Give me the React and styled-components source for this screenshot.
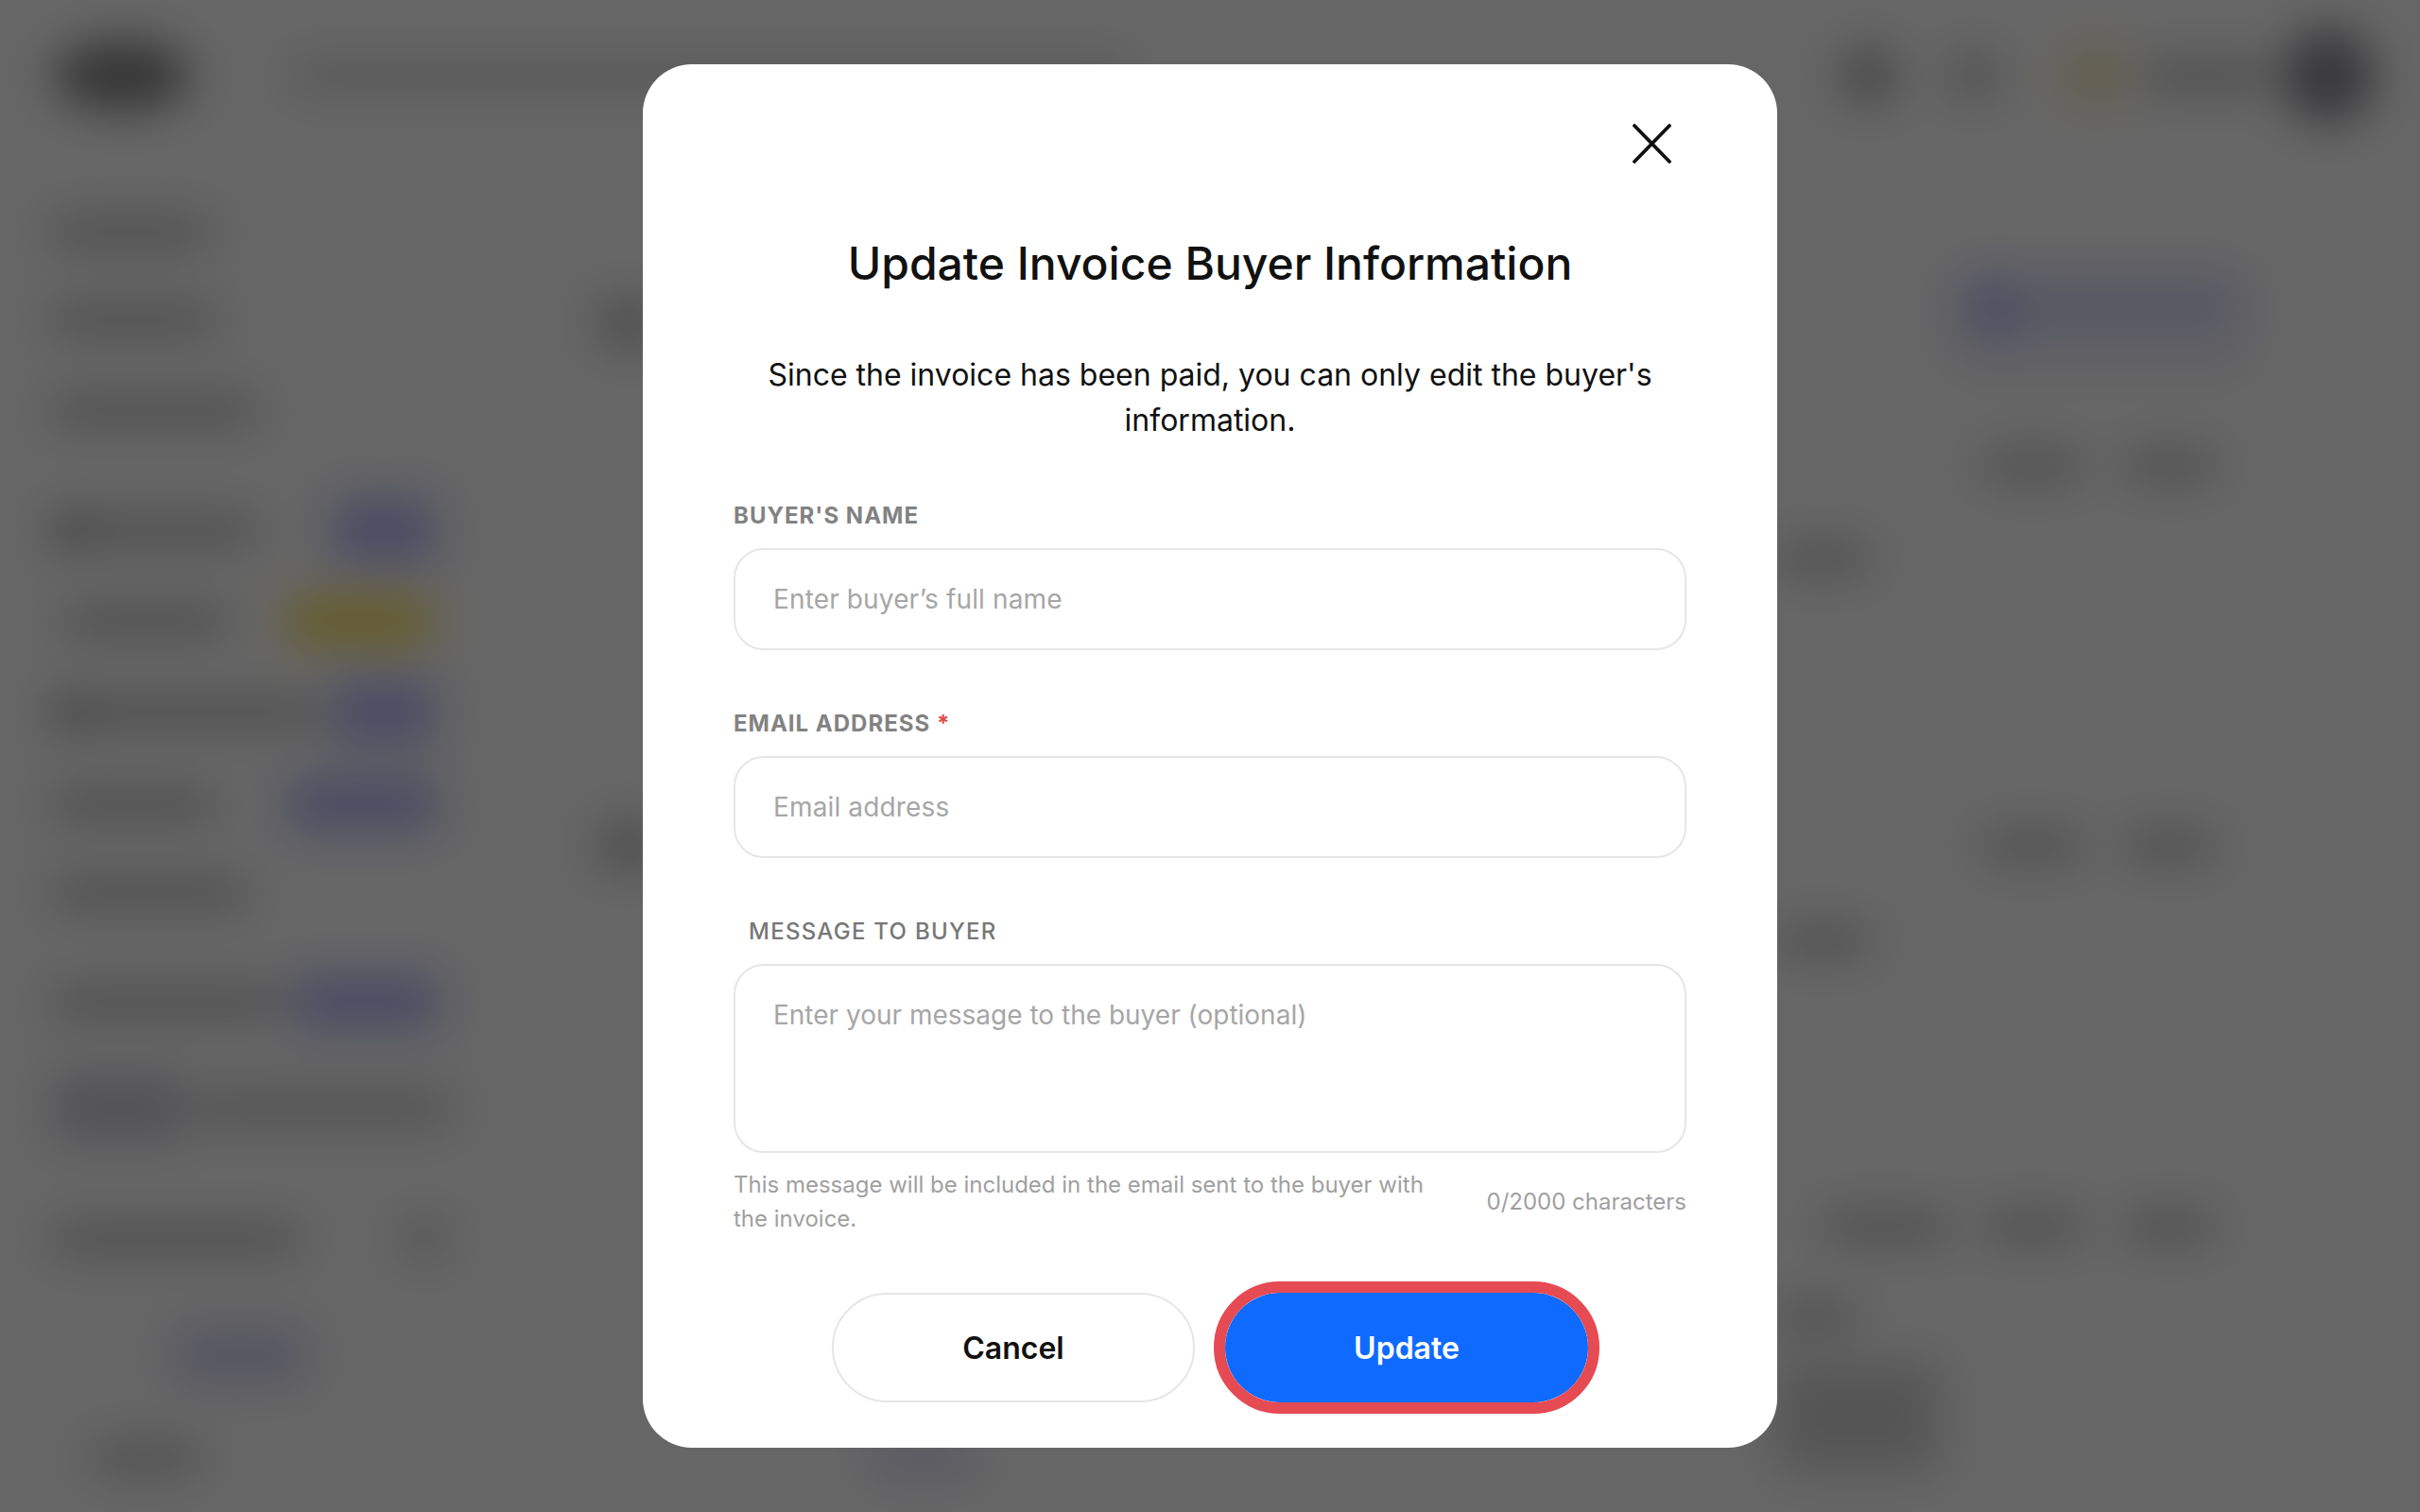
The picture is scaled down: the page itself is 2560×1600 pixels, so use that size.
import styled, { createGlobalStyle } from "styled-components";

const GlobalStyle = createGlobalStyle`
  * { box-sizing: border-box; }
  html, body { margin: 0; height: 100%; background: #fff; overflow: hidden; }
  body { font-family: Inter, "Liberation Sans", sans-serif; }
`;

const PURPLE = "#bcbcf8";
const YELLOW = "#ffe569";
const DARK = "#999";
const MID = "#bbb";

// page behind the dialog, only seen blurred
const Page = styled.div`
  width: 2560px;
  height: 1600px;
  overflow: hidden;
  filter: blur(24px);
  background: #fff;
`;

const Header = styled.header`
  height: 160px;
  padding-left: 56px;
  display: flex;
  align-items: center;
`;

const Body = styled.div`
  display: flex;
  height: 1440px;
`;

const Sidebar = styled.aside`
  width: 490px;
  padding: 68px 24px 0 56px;
  flex: none;
`;

const Main = styled.main`
  flex: 1;
  display: flex;
  flex-direction: column;
`;

const Row = styled.div`
  display: flex;
  align-items: ${(p) => p.$align || "center"};
  height: ${(p) => p.$h || 36}px;
  margin-top: ${(p) => p.$mt || 0}px;
  padding-left: ${(p) => p.$pl || 0}px;
`;

const Blob = styled.div`
  flex: none;
  width: ${(p) => p.$w}px;
  height: ${(p) => p.$h || 30}px;
  margin-left: ${(p) => p.$ml || 0}px;
  border-radius: ${(p) => (p.$round ? "50%" : "12px")};
  background: ${(p) => p.$c || MID};
`;

const Card = styled.div`
  flex: none;
  display: flex;
  align-items: flex-start;
  gap: 16px;
  width: 301px;
  height: 104px;
  margin-left: ${(p) => p.$ml}px;
  border-radius: 16px;
  background: linear-gradient(#e0e0fa 50%, #f0f0f8 75%);
`;

const Overlay = styled.div`
  position: fixed;
  inset: 0;
  display: flex;
  align-items: center;
  justify-content: center;
  background: rgba(0, 0, 0, 0.6);
`;

const Modal = styled.div`
  width: 1200px;
  padding: 63px 96px 48px;
  background: #fff;
  border-radius: 52px;
`;

const CloseRow = styled.div`
  display: flex;
  justify-content: flex-end;
  padding-right: 16px;
`;

const CloseIcon = styled.svg`
  display: block;
  width: 41px;
  height: 42px;
  stroke: #111;
  stroke-width: 3.8;
  stroke-linecap: round;
  fill: none;
`;

const Title = styled.h1`
  margin: 76px 0 0;
  font-size: 48px;
  line-height: 60px;
  font-weight: 500;
  color: #111;
  text-align: center;
`;

const Intro = styled.p`
  margin: 64px 0 0;
  font-size: 32px;
  line-height: 48px;
  font-weight: 400;
  color: #111;
  text-align: center;
`;

const Field = styled.div`
  margin-top: ${(p) => (p.$first ? 59 : 60)}px;
`;

const Label = styled.label`
  display: block;
  height: 36px;
  margin-bottom: 16px;
  padding-left: ${(p) => (p.$inset ? 16 : 0)}px;
  font-size: 24px;
  line-height: 36px;
  font-weight: ${(p) => (p.$inset ? 500 : 700)};
  letter-spacing: ${(p) => (p.$inset ? 1.27 : 1)}px;
  color: ${(p) => (p.$inset ? "#777" : "#828282")};
`;

const Required = styled.span`
  color: #e5484d;
`;

const Input = styled.input`
  display: block;
  width: 100%;
  height: 108px;
  padding: 0 40px;
  border: 2px solid #e6e6e6;
  border-radius: 32px;
  outline: none;
  background: #fff;
  font: 400 28px Inter, sans-serif;
  letter-spacing: 0.14px;
  color: #111;

  &::placeholder {
    color: #a6a6a6;
    opacity: 1;
  }
`;

const TextArea = styled(Input).attrs({ as: "textarea" })`
  height: 200px;
  padding: 34px 40px;
  line-height: 36px;
  letter-spacing: 0;
  resize: none;
`;

const Hints = styled.div`
  display: flex;
  align-items: center;
  justify-content: space-between;
  margin-top: 16px;
  font-size: 24px;
  line-height: 36px;
  color: #a0a0a0;
`;

const HelpText = styled.div`
  width: 760px;
`;

const Actions = styled.div`
  display: flex;
  justify-content: center;
  gap: 32px;
  margin-top: 60px;
`;

const Button = styled.button`
  width: 384px;
  height: 116px;
  border-radius: 58px;
  border: ${(p) => (p.$primary ? "none" : "2px solid #e6e6e6")};
  outline: ${(p) => (p.$primary ? "12px solid #e64a52" : "none")};
  background: ${(p) => (p.$primary ? "#0f6bff" : "#fff")};
  color: ${(p) => (p.$primary ? "#fff" : "#111")};
  font: 600 32px Inter, sans-serif;
`;

const sideRows = [
  { mt: 0, label: 164 },
  { mt: 56, label: 170 },
  { mt: 60, label: 214 },
  { mt: 91, label: 214, icon: true, pill: { w: 110, h: 70, c: PURPLE, ml: 81 } },
  { mt: 60, label: 170, pad: 14, pill: { w: 150, h: 54, c: YELLOW, ml: 65 } },
  { mt: 61, label: 280, icon: true, pill: { w: 110, h: 70, c: PURPLE, ml: 15 } },
  { mt: 61, label: 170, pill: { w: 160, h: 60, c: PURPLE, ml: 77 } },
  { mt: 58, label: 204 },
  { mt: 79, label: 240, pill: { w: 155, h: 60, c: PURPLE, ml: 14 } },
];

const App = () => (
  <>
    <GlobalStyle />
    <Page aria-hidden="true">
      <Header>
        <Blob $w={146} $h={74} $c="#858585" $round />
        <Blob $w={880} $h={30} $c="#d4d4d4" $ml={108} />
        <Blob $w={60} $h={60} $c="#afafaf" $round $ml={757} />
        <Blob $w={50} $h={50} $c="#c3c3c3" $round $ml={56} />
        <Blob $w={60} $h={60} $c="#f6e7ad" $round $ml={73} />
        <Blob $w={130} $h={30} $c={MID} $ml={22} />
        <Blob $w={100} $h={100} $c="#8e8e96" $round $ml={15} />
      </Header>
      <Body>
        <Sidebar>
          {sideRows.map((r) => (
            <Row key={r.mt + "-" + r.label} $mt={r.mt} $pl={r.pad}>
              {r.icon ? <Blob $w={40} $h={40} $c={DARK} $round /> : null}
              <Blob $w={r.icon ? r.label - 40 : r.label} $c={MID} />
              {r.pill ? <Blob $w={r.pill.w} $h={r.pill.h} $c={r.pill.c} $ml={r.pill.ml} /> : null}
            </Row>
          ))}
          <Row $mt={56} $h={76}>
            <Blob $w={140} $h={76} $c="#d0d0da" />
            <Blob $w={270} $h={46} $c="#d4d4d4" $ml={10} />
          </Row>
          <Row $mt={83}>
            <Blob $w={260} $c={MID} />
            <Blob $w={46} $h={46} $c="#ccc" $round $ml={110} />
          </Row>
          <Row $mt={75} $h={60} $pl={130}>
            <Blob $w={136} $h={60} $c="#d4d4f0" />
          </Row>
          <Row $mt={60} $pl={44}>
            <Blob $w={110} $c={MID} />
          </Row>
        </Sidebar>
        <Main>
          <Row $mt={130} $h={104} $pl={145}>
            <Blob $w={60} $h={50} $c="#bcbcbc" />
            <Card $ml={1376}>
              <Blob $w={70} $h={70} $c="#c4c4fa" $round />
              <Blob $w={200} $h={36} $c="#d8d8f8" />
            </Card>
          </Row>
          <Row $mt={81} $pl={1610}>
            <Blob $w={100} />
            <Blob $w={90} $ml={50} />
          </Row>
          <Row $mt={60} $h={40} $pl={1390}>
            <Blob $w={95} />
          </Row>
          <Row $mt={266} $pl={145}>
            <Blob $w={60} $h={50} $c="#bcbcbc" />
            <Blob $w={100} $ml={1405} />
            <Blob $w={90} $ml={50} />
          </Row>
          <Row $mt={63} $h={40} $pl={1390}>
            <Blob $w={95} />
          </Row>
          <Row $mt={264} $pl={1440}>
            <Blob $w={130} />
            <Blob $w={100} $ml={40} />
            <Blob $w={90} $ml={50} />
          </Row>
          <Row $mt={59} $pl={1390}>
            <Blob $w={80} />
          </Row>
          <Row $mt={27} $h={120} $pl={430} $align="flex-end">
            <Blob $w={110} $c="#d0d0f0" />
            <Blob $w={170} $h={116} $c="#d4d4d4" $ml={850} />
          </Row>
        </Main>
      </Body>
    </Page>
    <Overlay>
      <Modal role="dialog">
        <CloseRow>
          <CloseIcon viewBox="0 0 41 42">
            <path d="M2 2 39 40M39 2 2 40" />
          </CloseIcon>
        </CloseRow>
        <Title>Update Invoice Buyer Information</Title>
        <Intro>
          Since the invoice has been paid, you can only edit the buyer's
          <br />
          information.
        </Intro>
        <Field $first>
          <Label>BUYER'S NAME</Label>
          <Input placeholder="Enter buyer’s full name" />
        </Field>
        <Field>
          <Label>
            EMAIL ADDRESS <Required>*</Required>
          </Label>
          <Input placeholder="Email address" />
        </Field>
        <Field>
          <Label $inset>MESSAGE TO BUYER</Label>
          <TextArea placeholder="Enter your message to the buyer (optional)" />
        </Field>
        <Hints>
          <HelpText>This message will be included in the email sent to the buyer with the invoice.</HelpText>
          <span>0/2000 characters</span>
        </Hints>
        <Actions>
          <Button>Cancel</Button>
          <Button $primary>Update</Button>
        </Actions>
      </Modal>
    </Overlay>
  </>
);

export default App;
